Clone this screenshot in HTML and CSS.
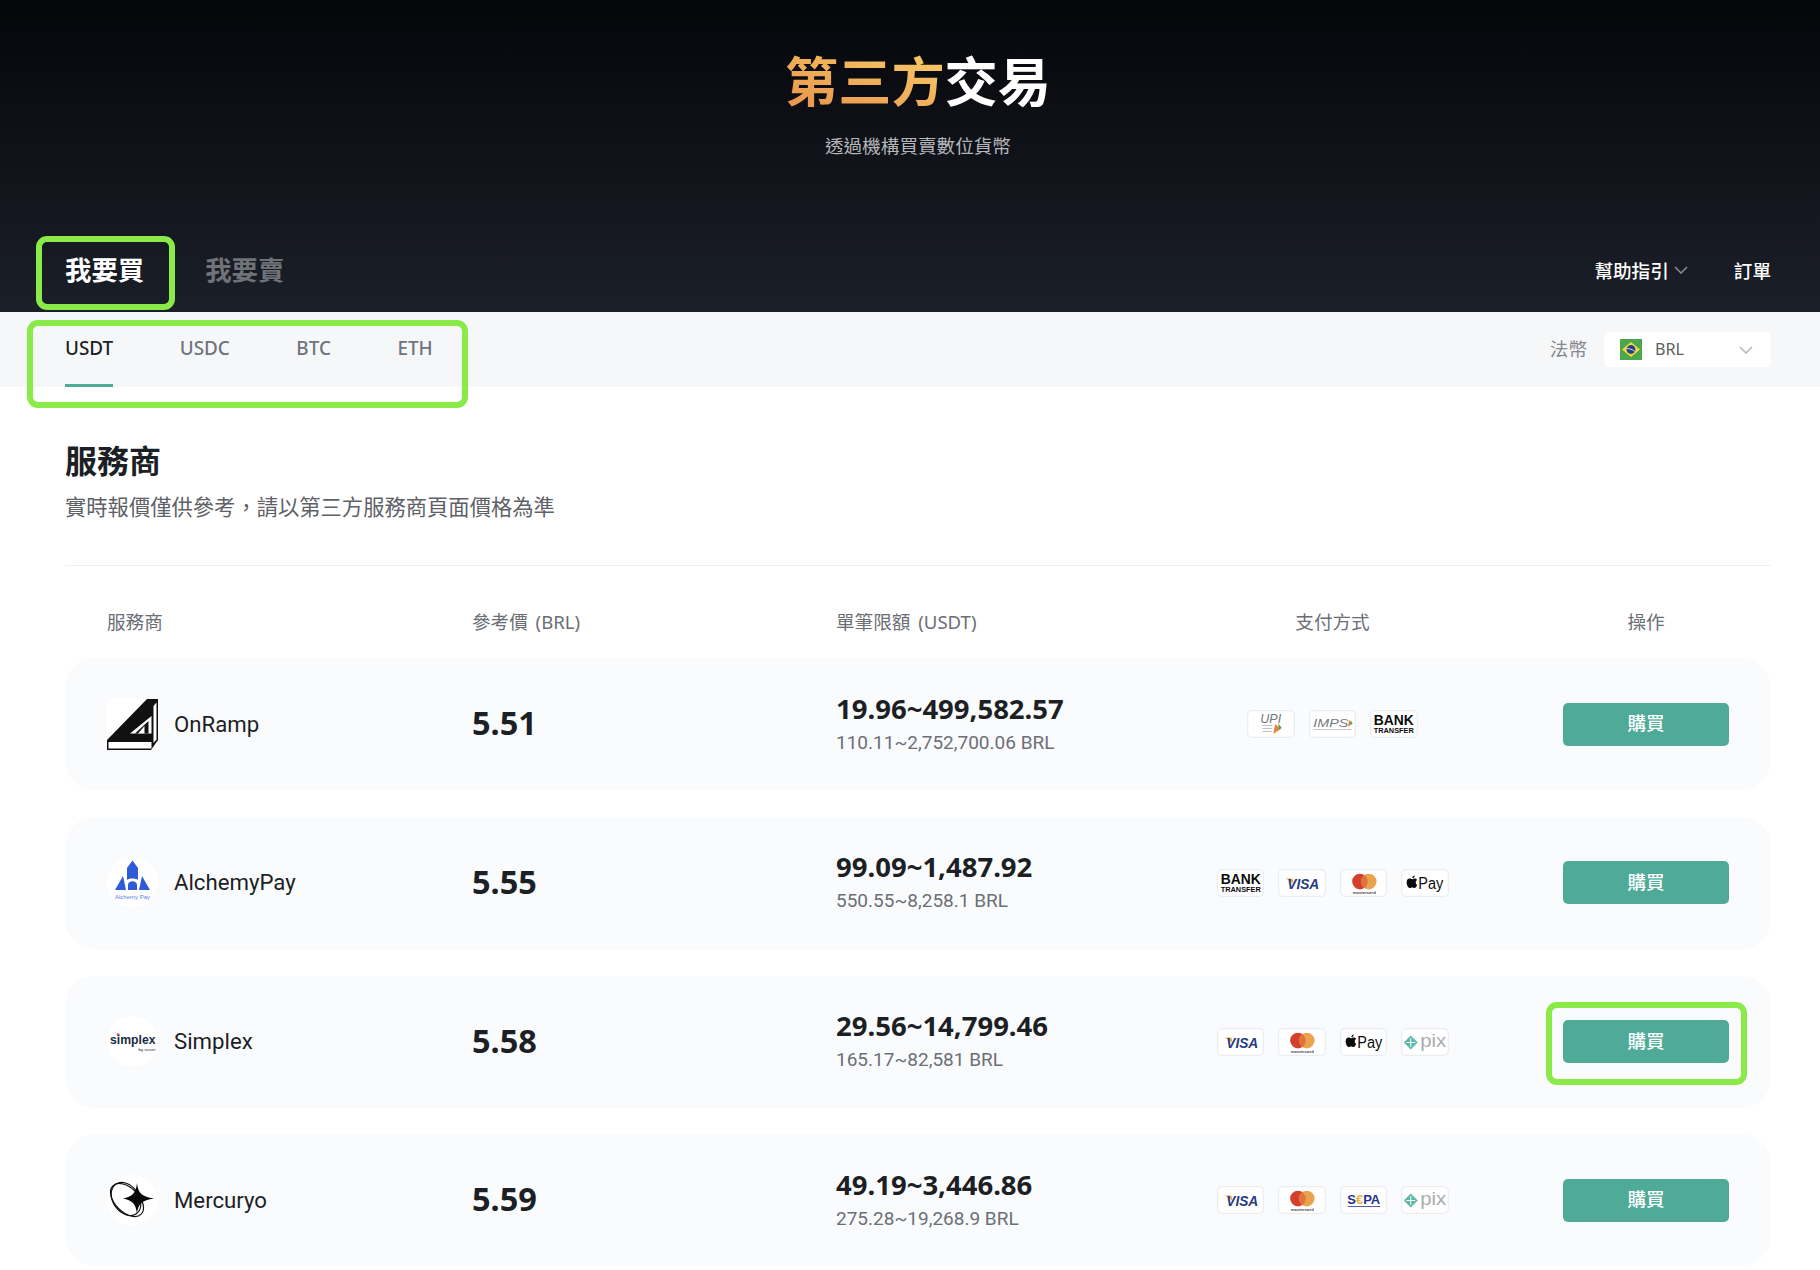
FILE: index.html
```html
<!DOCTYPE html>
<html lang="zh-Hant">
<head>
    <meta charset="utf-8">
    <meta name="viewport" content="width=device-width, initial-scale=1">
    <title>第三方交易</title>
    <link rel="stylesheet" href="styles.css">
</head>
<body>
    <header class="top">
        <div class="hero">
            <h1 class="hero-title"><span class="hero-accent">第三方</span>交易</h1>
            <p class="hero-sub">透過機構買賣數位貨幣</p>
        </div>
        <div class="top-bar">
            <div class="side-tabs">
                <a class="side-tab active">我要買<span class="mark mark-side"></span></a>
                <a class="side-tab">我要賣</a>
            </div>
            <nav class="top-links">
                <a class="top-link">幫助指引
                    <svg class="chevron chevron-dark" viewBox="0 0 14 8"><path d="M1 1 L7 7 L13 1"/></svg>
                </a>
                <a class="top-link">訂單</a>
            </nav>
        </div>
    </header>

    <div class="subnav">
        <div class="coin-tabs">
            <a class="coin-tab active">USDT</a>
            <a class="coin-tab">USDC</a>
            <a class="coin-tab">BTC</a>
            <a class="coin-tab">ETH</a>
            <span class="mark mark-coins"></span>
        </div>
        <div class="fiat">
            <span class="fiat-label">法幣</span>
            <div class="fiat-select">
                <svg class="flag" viewBox="0 0 22 21">
                    <rect width="22" height="21" fill="#4ca64c"/>
                    <path d="M11 3 L20 10.5 L11 18 L2 10.5 Z" fill="#f4d63c"/>
                    <circle cx="11" cy="10.5" r="4.4" fill="#24408e"/>
                    <path d="M7 9.5 C9 9.5 13 10.5 15 12.5" stroke="#fff" stroke-width="0.8" fill="none"/>
                </svg>
                <span class="fiat-code">BRL</span>
                <svg class="chevron chevron-light" viewBox="0 0 14 8"><path d="M1 1 L7 7 L13 1"/></svg>
            </div>
        </div>
    </div>

    <main class="content">
        <h2 class="section-title">服務商</h2>
        <p class="section-sub">實時報價僅供參考，請以第三方服務商頁面價格為準</p>

        <div class="table-head">
            <span>服務商</span>
            <span>參考價 (BRL)</span>
            <span>單筆限額 (USDT)</span>
            <span class="center">支付方式</span>
            <span class="head-action">操作</span>
        </div>

        <div class="rows">
            <div class="row">
                <div class="provider">
                    <svg class="provider-logo" viewBox="0 0 51 51">
                        <rect width="51" height="51" fill="#fff"/>
                        <path d="M40 0 H51 V41 L44 51 H0 V41 Z" fill="#111"/>
                        <path d="M1.5 43 H44.5 V49.5 H1.5 Z" fill="#fff"/>
                        <path d="M46.5 7 L49.5 3.5 V40.5 L46.5 44 Z" fill="#fff"/>
                        <path d="M44.5 17 V34.5 H23 Z" fill="#fff"/>
                        <path d="M41.5 22 V34.5 H28 Z" fill="#111"/>
                        <path d="M37.5 27 V34.5 H31 Z" fill="#fff"/>
                    </svg>
                    <span class="provider-name">OnRamp</span>
                </div>
                <div class="price">5.51</div>
                <div class="limit">
                    <div class="limit-main">19.96~499,582.57</div>
                    <div class="limit-sub">110.11~2,752,700.06 BRL</div>
                </div>
                <div class="pay-list">
                    <svg class="pay" viewBox="0 0 47 28">
                        <text class="pt pt-upi" x="13" y="13" textLength="21" lengthAdjust="spacingAndGlyphs">UPI</text>
                        <path d="M15 15.5 H25 M15 18.5 H25 M15 21.5 H25" stroke="#b9bbbf" stroke-width="0.9"/>
                        <path d="M28 14 L33.5 19 L26 24 Z" fill="#e8833a"/>
                        <path d="M31 13 L34.5 18 L31.5 20 Z" fill="#5aa35a"/>
                    </svg>
                    <svg class="pay" viewBox="0 0 47 28">
                        <text class="pt pt-imps" x="4" y="17" textLength="35" lengthAdjust="spacingAndGlyphs">IMPS</text>
                        <path d="M39.5 10 L43 13.5 L39 17 Z" fill="#e8833a"/>
                        <path d="M41 10 L43.5 13.5 L41 15 Z" fill="#5aa35a"/>
                        <path d="M4 19.5 H42" stroke="#bfc1c5" stroke-width="0.9"/>
                    </svg>
                    <svg class="pay" viewBox="0 0 47 28">
                        <text class="pt pt-bank" x="3.5" y="15" textLength="40" lengthAdjust="spacingAndGlyphs">BANK</text>
                        <text class="pt pt-transfer" x="3.5" y="23" textLength="40" lengthAdjust="spacingAndGlyphs">TRANSFER</text>
                    </svg>
                </div>
                <div class="action"><button class="buy">購買</button></div>
            </div>

            <div class="row">
                <div class="provider">
                    <svg class="provider-logo" viewBox="0 0 51 51">
                        <circle cx="25.5" cy="25.5" r="25.5" fill="#fff"/>
                        <path d="M25.5 3.5 L31 11 V23 C29 21 22 21 20 23 V11 Z" fill="#2f5cd6"/>
                        <path d="M16 19 L19 33 H8 Z M35 19 L43 33 H32 Z" fill="#2f5cd6"/>
                        <path d="M21 33 V28 C21 23 30 23 30 28 V33 Z" fill="#2f5cd6"/>
                        <text class="pt pt-alchemy" x="8" y="41.5" textLength="35" lengthAdjust="spacingAndGlyphs">Alchemy Pay</text>
                    </svg>
                    <span class="provider-name">AlchemyPay</span>
                </div>
                <div class="price">5.55</div>
                <div class="limit">
                    <div class="limit-main">99.09~1,487.92</div>
                    <div class="limit-sub">550.55~8,258.1 BRL</div>
                </div>
                <div class="pay-list">
                    <svg class="pay" viewBox="0 0 47 28">
                        <text class="pt pt-bank" x="3.5" y="15" textLength="40" lengthAdjust="spacingAndGlyphs">BANK</text>
                        <text class="pt pt-transfer" x="3.5" y="23" textLength="40" lengthAdjust="spacingAndGlyphs">TRANSFER</text>
                    </svg>
                    <svg class="pay" viewBox="0 0 47 28">
                        <path d="M7 9.5 H14 L16 16 C14 13 11 11 7 9.5 Z" fill="#eaa94c"/>
                        <text class="pt pt-visa" x="9" y="19.5" textLength="32" lengthAdjust="spacingAndGlyphs">VISA</text>
                    </svg>
                    <svg class="pay" viewBox="0 0 47 28">
                        <circle cx="19.7" cy="12.6" r="7.8" fill="#d3402e"/>
                        <circle cx="28.5" cy="12.6" r="7.8" fill="#e8a34c"/>
                        <path d="M24.1 6.2 A7.8 7.8 0 0 1 24.1 19 A7.8 7.8 0 0 1 24.1 6.2 Z" fill="#e0733c"/>
                        <text class="pt pt-master" x="12.5" y="25" textLength="23" lengthAdjust="spacingAndGlyphs">mastercard</text>
                    </svg>
                    <svg class="pay" viewBox="0 0 47 28">
                        <path d="M13.6 9.6 C12.4 9.6 11.7 10.3 10.9 10.3 C10.1 10.3 9.3 9.6 8.3 9.6 C6.6 9.6 5.4 11.1 5.4 13.4 C5.4 16 7.1 19 8.6 19 C9.4 19 9.9 18.4 10.9 18.4 C11.9 18.4 12.4 19 13.2 19 C14.4 19 15.6 17.2 16 15.8 C14.2 15 13.9 12.2 15.8 11 C15.2 10.1 14.4 9.6 13.6 9.6 Z M13.4 6.4 C12.2 6.5 11 7.7 11.1 9.1 C12.4 9.2 13.6 7.8 13.4 6.4 Z" fill="#0b0b0b"/>
                        <text class="pt pt-apple" x="17" y="19.5" textLength="25" lengthAdjust="spacingAndGlyphs">Pay</text>
                    </svg>
                </div>
                <div class="action"><button class="buy">購買</button></div>
            </div>

            <div class="row">
                <div class="provider">
                    <svg class="provider-logo" viewBox="0 0 51 51">
                        <circle cx="25.5" cy="25.5" r="25.5" fill="#fff"/>
                        <circle cx="11.2" cy="18.5" r="1.3" fill="#e23a55"/>
                        <text class="pt pt-simplex" x="3" y="28" textLength="45.5" lengthAdjust="spacingAndGlyphs">simplex</text>
                        <text class="pt pt-nuvei" x="31.5" y="35" textLength="17" lengthAdjust="spacingAndGlyphs">by nuvei</text>
                    </svg>
                    <span class="provider-name">Simplex</span>
                </div>
                <div class="price">5.58</div>
                <div class="limit">
                    <div class="limit-main">29.56~14,799.46</div>
                    <div class="limit-sub">165.17~82,581 BRL</div>
                </div>
                <div class="pay-list">
                    <svg class="pay" viewBox="0 0 47 28">
                        <path d="M7 9.5 H14 L16 16 C14 13 11 11 7 9.5 Z" fill="#eaa94c"/>
                        <text class="pt pt-visa" x="9" y="19.5" textLength="32" lengthAdjust="spacingAndGlyphs">VISA</text>
                    </svg>
                    <svg class="pay" viewBox="0 0 47 28">
                        <circle cx="19.7" cy="12.6" r="7.8" fill="#d3402e"/>
                        <circle cx="28.5" cy="12.6" r="7.8" fill="#e8a34c"/>
                        <path d="M24.1 6.2 A7.8 7.8 0 0 1 24.1 19 A7.8 7.8 0 0 1 24.1 6.2 Z" fill="#e0733c"/>
                        <text class="pt pt-master" x="12.5" y="25" textLength="23" lengthAdjust="spacingAndGlyphs">mastercard</text>
                    </svg>
                    <svg class="pay" viewBox="0 0 47 28">
                        <path d="M13.6 9.6 C12.4 9.6 11.7 10.3 10.9 10.3 C10.1 10.3 9.3 9.6 8.3 9.6 C6.6 9.6 5.4 11.1 5.4 13.4 C5.4 16 7.1 19 8.6 19 C9.4 19 9.9 18.4 10.9 18.4 C11.9 18.4 12.4 19 13.2 19 C14.4 19 15.6 17.2 16 15.8 C14.2 15 13.9 12.2 15.8 11 C15.2 10.1 14.4 9.6 13.6 9.6 Z M13.4 6.4 C12.2 6.5 11 7.7 11.1 9.1 C12.4 9.2 13.6 7.8 13.4 6.4 Z" fill="#0b0b0b"/>
                        <text class="pt pt-apple" x="17" y="19.5" textLength="25" lengthAdjust="spacingAndGlyphs">Pay</text>
                    </svg>
                    <svg class="pay" viewBox="0 0 47 28">
                        <path d="M9.5 7.5 L16.5 14.5 L9.5 21.5 L2.5 14.5 Z" fill="#5fb9ab"/>
                        <path d="M9.5 10 V19 M5 14.5 H14" stroke="#fff" stroke-width="1"/>
                        <text class="pt pt-pix" x="19" y="18.5" textLength="26" lengthAdjust="spacingAndGlyphs">pix</text>
                    </svg>
                </div>
                <div class="action"><button class="buy">購買<span class="mark mark-buy"></span></button></div>
            </div>

            <div class="row">
                <div class="provider">
                    <svg class="provider-logo" viewBox="0 0 51 51">
                        <circle cx="25.5" cy="25.5" r="25.5" fill="#fff"/>
                        <ellipse cx="20" cy="25" rx="20" ry="12" transform="rotate(45 20 25)" fill="none" stroke="#111" stroke-width="1.2"/>
                        <ellipse cx="19" cy="24" rx="18" ry="13" transform="rotate(55 19 24)" fill="none" stroke="#111" stroke-width="1.2"/>
                        <path d="M30 8 C31 18 35 22 47 23.5 C35 25 31 29 30 39 C29 29 25 25 16 23.5 C25 22 29 18 30 8 Z" fill="#050505"/>
                    </svg>
                    <span class="provider-name">Mercuryo</span>
                </div>
                <div class="price">5.59</div>
                <div class="limit">
                    <div class="limit-main">49.19~3,446.86</div>
                    <div class="limit-sub">275.28~19,268.9 BRL</div>
                </div>
                <div class="pay-list">
                    <svg class="pay" viewBox="0 0 47 28">
                        <path d="M7 9.5 H14 L16 16 C14 13 11 11 7 9.5 Z" fill="#eaa94c"/>
                        <text class="pt pt-visa" x="9" y="19.5" textLength="32" lengthAdjust="spacingAndGlyphs">VISA</text>
                    </svg>
                    <svg class="pay" viewBox="0 0 47 28">
                        <circle cx="19.7" cy="12.6" r="7.8" fill="#d3402e"/>
                        <circle cx="28.5" cy="12.6" r="7.8" fill="#e8a34c"/>
                        <path d="M24.1 6.2 A7.8 7.8 0 0 1 24.1 19 A7.8 7.8 0 0 1 24.1 6.2 Z" fill="#e0733c"/>
                        <text class="pt pt-master" x="12.5" y="25" textLength="23" lengthAdjust="spacingAndGlyphs">mastercard</text>
                    </svg>
                    <svg class="pay" viewBox="0 0 47 28">
                        <text class="pt pt-sepa" x="7" y="18" textLength="33" lengthAdjust="spacingAndGlyphs">S<tspan class="pt-euro">€</tspan>PA</text>
                        <path d="M7.5 20.5 H40" stroke="#5560a8" stroke-width="1"/>
                    </svg>
                    <svg class="pay" viewBox="0 0 47 28">
                        <path d="M9.5 7.5 L16.5 14.5 L9.5 21.5 L2.5 14.5 Z" fill="#5fb9ab"/>
                        <path d="M9.5 10 V19 M5 14.5 H14" stroke="#fff" stroke-width="1"/>
                        <text class="pt pt-pix" x="19" y="18.5" textLength="26" lengthAdjust="spacingAndGlyphs">pix</text>
                    </svg>
                </div>
                <div class="action"><button class="buy">購買</button></div>
            </div>
        </div>
    </main>
</body>
</html>
```

FILE: styles.css
```css
* {
    box-sizing: border-box;
}
html, body {
    height: 100%;
    overflow: hidden;
}
body {
    margin: 0;
    background-color: #fff;
    color: #1c1f24;
    font-family: "Noto Sans", "Noto Sans CJK TC", sans-serif;
}
h1, h2, p {
    margin: 0;
}

/* green annotation frames */
.mark {
    position: absolute;
    border: 6px solid #8aea48;
    border-radius: 11px;
    pointer-events: none;
}
.mark-side {
    left: -29px;
    top: -19px;
    width: 139px;
    height: 74px;
}
.mark-coins {
    left: -38px;
    top: 8px;
    width: 441px;
    height: 88px;
}
.mark-buy {
    left: -17px;
    top: -18px;
    width: 201px;
    height: 83px;
}

/* header */
.top {
    height: 312px;
    display: flex;
    flex-direction: column;
    background: linear-gradient(180deg, #05060a 0%, #1b1f28 100%);
}
.hero {
    padding: 53px 0 0 16px;
    text-align: center;
}
.hero-title {
    font-family: "Noto Sans CJK TC", sans-serif;
    font-size: 53.2px;
    line-height: 52px;
    font-weight: 700;
    color: #fff;
}
.hero-accent {
    background: linear-gradient(20deg, #e68f49 0%, #fbd26c 100%);
    -webkit-background-clip: text;
    background-clip: text;
    color: transparent;
}
.hero-sub {
    margin-top: 26px;
    font-family: "Noto Sans CJK TC", sans-serif;
    font-size: 18.6px;
    line-height: 28px;
    color: #b4b6ba;
}
.top-bar {
    margin-top: auto;
    height: 84px;
    padding: 0 49px 2px 65px;
    display: flex;
    justify-content: space-between;
    align-items: center;
}
.side-tabs {
    display: flex;
    gap: 61px;
}
.side-tab {
    position: relative;
    font-family: "Noto Sans CJK TC", sans-serif;
    font-size: 26.4px;
    line-height: 28px;
    font-weight: 700;
    color: #6f7277;
}
.side-tab.active {
    color: #fff;
}
.top-links {
    display: flex;
    align-items: center;
    gap: 46px;
}
.top-link {
    display: flex;
    align-items: center;
    gap: 5px;
    font-family: "Noto Sans CJK TC", sans-serif;
    font-size: 18.6px;
    font-weight: 500;
    color: #fff;
}
.chevron {
    fill: none;
    stroke-width: 1.5;
}
.chevron-dark {
    width: 14px;
    height: 8px;
    margin-top: 2px;
    stroke: #8b8e93;
}
.chevron-light {
    width: 14px;
    height: 8px;
    stroke: #b5b7bb;
    margin-left: auto;
}

/* coin tabs and fiat */
.subnav {
    height: 75px;
    padding: 0 49px 0 65px;
    display: flex;
    justify-content: space-between;
    background-color: #f6f7f9;
}
.coin-tabs {
    position: relative;
    display: flex;
    gap: 66.5px;
}
.coin-tab {
    height: 75px;
    padding-top: 22px;
    font-size: 18.9px;
    line-height: 28px;
    font-weight: 500;
    color: #70747c;
    border-bottom: 3px solid transparent;
}
.coin-tab.active {
    color: #1c1f24;
    border-bottom-color: #4fab98;
}
.fiat {
    display: flex;
    align-items: flex-start;
    padding-top: 20px;
    gap: 17px;
}
.fiat-label {
    font-family: "Noto Sans CJK TC", sans-serif;
    font-size: 18.6px;
    line-height: 32px;
    color: #85888e;
}
.fiat-select {
    width: 167px;
    height: 35px;
    padding: 0 18px 0 16px;
    display: flex;
    align-items: center;
    background-color: #fff;
    border-radius: 5px;
}
.flag {
    width: 22px;
    height: 21px;
}
.fiat-code {
    margin: 0 0 2px 13px;
    font-size: 16.2px;
    color: #5c5f65;
}

/* providers */
.content {
    padding: 52px 49px 0 65px;
}
.section-title {
    font-family: "Noto Sans CJK TC", sans-serif;
    font-size: 32px;
    line-height: 40px;
    font-weight: 700;
}
.section-sub {
    margin-top: 12px;
    font-family: "Noto Sans CJK TC", sans-serif;
    font-size: 21.3px;
    line-height: 30px;
    color: #5e6167;
}
.table-head,
.row {
    display: grid;
    grid-template-columns: 365px 364px 309px 375px 209px;
    padding: 0 42px;
}
.table-head {
    margin-top: 44px;
    padding-top: 42px;
    padding-bottom: 22px;
    border-top: 1px solid #eff0f2;
    font-size: 18.6px;
    line-height: 28px;
    word-spacing: 3px;
    color: #6b6e74;
}
.center {
    text-align: center;
}
.head-action {
    justify-self: end;
    width: 166px;
    text-align: center;
}
.rows {
    display: flex;
    flex-direction: column;
    gap: 26.8px;
}
.row {
    height: 132px;
    align-items: center;
    background-color: #fafbfd;
    border-radius: 30px;
}
.provider {
    display: flex;
    align-items: center;
    gap: 16px;
}
.provider-logo {
    width: 51px;
    height: 51px;
}
.provider-name {
    margin-bottom: 1px;
    font-family: Roboto, sans-serif;
    font-size: 22.2px;
    color: #1c1f24;
}
.price {
    margin-bottom: 3px;
    font-size: 32.5px;
    font-weight: 700;
}
.limit-main {
    font-size: 27.5px;
    line-height: 36px;
    font-weight: 700;
}
.limit-sub {
    margin-top: 1px;
    font-family: Roboto, sans-serif;
    font-size: 19px;
    line-height: 30px;
    color: #6c6f75;
}
.pay-list {
    display: flex;
    justify-content: center;
    gap: 14px;
}
.pay {
    width: 47.5px;
    height: 28px;
    background-color: #fff;
    box-shadow: inset 0 0 0 1.3px #ebedf1;
    border-radius: 5px;
}
.action {
    justify-self: end;
    width: 166px;
}
.buy {
    position: relative;
    width: 166px;
    height: 43px;
    padding: 0 0 5px;
    border: none;
    border-radius: 5px;
    background-color: #4fab98;
    color: #fff;
    font-family: "Noto Sans CJK TC", sans-serif;
    font-size: 18.6px;
    font-weight: 500;
    cursor: pointer;
}

/* text inside the svg marks */
.pt {
    font-family: "Liberation Sans", sans-serif;
}
.pt-bank {
    font-size: 15px;
    font-weight: 700;
    fill: #0c0c0c;
}
.pt-transfer {
    font-size: 7.6px;
    font-weight: 700;
    fill: #0c0c0c;
}
.pt-visa {
    font-size: 15px;
    font-weight: 700;
    font-style: italic;
    fill: #263b80;
}
.pt-master {
    font-size: 4px;
    font-weight: 700;
    fill: #4a4a4a;
}
.pt-apple {
    font-size: 16px;
    fill: #0b0b0b;
}
.pt-pix {
    font-size: 18px;
    fill: #a9acaf;
}
.pt-upi {
    font-size: 12px;
    font-style: italic;
    fill: #74777b;
}
.pt-imps {
    font-size: 11px;
    font-style: italic;
    fill: #77797d;
}
.pt-sepa {
    font-size: 13px;
    font-weight: 700;
    fill: #26348f;
}
.pt-euro {
    fill: #e8b33c;
}
.pt-alchemy {
    font-size: 4.6px;
    fill: #5a7ee0;
}
.pt-simplex {
    font-size: 13.2px;
    font-weight: 700;
    fill: #1c2b45;
}
.pt-nuvei {
    font-size: 4px;
    fill: #1c2b45;
}
```
